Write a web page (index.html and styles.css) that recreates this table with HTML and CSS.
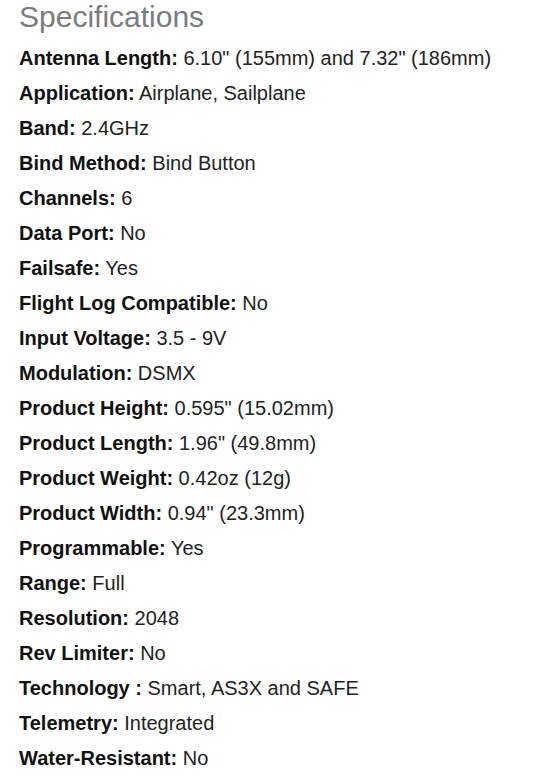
FILE: index.html
```html
<!DOCTYPE html>
<html>
<head>
<meta charset="utf-8">
<link rel="stylesheet" href="styles.css">
</head>
<body>
<div class="specs">
  <h2 class="title">Specifications</h2>
  <ul class="list">
    <li><b>Antenna Length:</b> 6.10" (155mm) and 7.32" (186mm)</li>
    <li><b>Application:</b> Airplane, Sailplane</li>
    <li><b>Band:</b> 2.4GHz</li>
    <li><b>Bind Method:</b> Bind Button</li>
    <li><b>Channels:</b> 6</li>
    <li><b>Data Port:</b> No</li>
    <li><b>Failsafe:</b> Yes</li>
    <li><b>Flight Log Compatible:</b> No</li>
    <li><b>Input Voltage:</b> 3.5 - 9V</li>
    <li><b>Modulation:</b> DSMX</li>
    <li><b>Product Height:</b> 0.595" (15.02mm)</li>
    <li><b>Product Length:</b> 1.96" (49.8mm)</li>
    <li><b>Product Weight:</b> 0.42oz (12g)</li>
    <li><b>Product Width:</b> 0.94" (23.3mm)</li>
    <li><b>Programmable:</b> Yes</li>
    <li><b>Range:</b> Full</li>
    <li><b>Resolution:</b> 2048</li>
    <li><b>Rev Limiter:</b> No</li>
    <li><b>Technology :</b> Smart, AS3X and SAFE</li>
    <li><b>Telemetry:</b> Integrated</li>
    <li><b>Water-Resistant:</b> No</li>
  </ul>
</div>
</body>
</html>
```
FILE: styles.css
```css
html, body {
  margin: 0;
  padding: 0;
  background: #fff;
}
.specs {
  padding-left: 19px;
  font-family: "Liberation Sans", Arial, sans-serif;
  color: #222;
}
.title {
  margin: 0 0 7px;
  font-size: 30px;
  font-weight: normal;
  color: #7a7c80;
  line-height: 34px;
}
.list {
  list-style: none;
  margin: 0;
  padding: 0;
  font-size: 20px;
  line-height: 35px;
}
.list b {
  color: #111;
}
```
